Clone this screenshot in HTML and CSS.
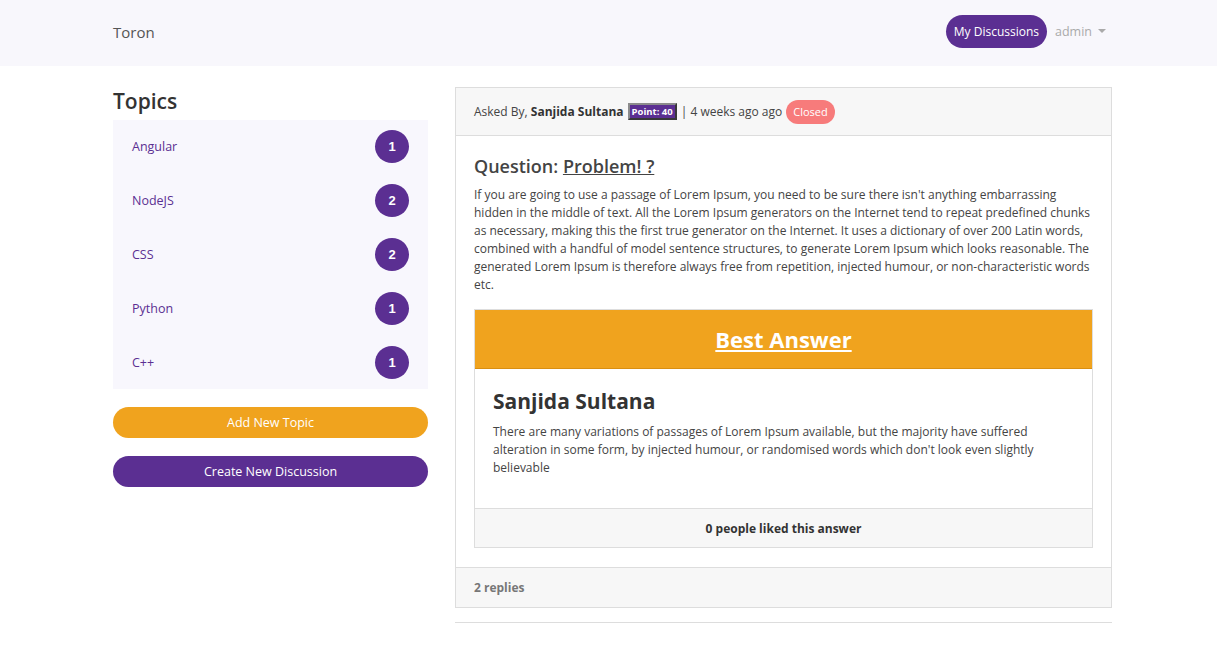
FILE: index.html
```html
<!DOCTYPE html>
<html>
<head>
<meta charset="utf-8">
<link rel="stylesheet" href="styles.css">
</head>
<body>
<header class="topbar">
  <div class="wrap topbar-inner">
    <a class="brand">Toron</a>
    <div class="nav-right">
      <a class="btn-pill">My Discussions</a>
      <span class="user">admin <span class="caret"></span></span>
    </div>
  </div>
</header>
<main class="wrap layout">
  <aside class="sidebar">
    <h2 class="side-title">Topics</h2>
    <ul class="topics">
      <li><span>Angular</span><span class="count">1</span></li>
      <li><span>NodeJS</span><span class="count">2</span></li>
      <li><span>CSS</span><span class="count">2</span></li>
      <li><span>Python</span><span class="count">1</span></li>
      <li><span>C++</span><span class="count">1</span></li>
    </ul>
    <button class="wide-btn orange">Add New Topic</button>
    <button class="wide-btn purple">Create New Discussion</button>
  </aside>
  <section class="content">
    <div class="card">
      <div class="card-head">
        <span>Asked By, <b>Sanjida Sultana</b></span>
        <span class="point">Point: 40</span>
        <span>| 4 weeks ago ago</span>
        <span class="closed">Closed</span>
      </div>
      <div class="card-body">
        <h3 class="q-title">Question: <u>Problem! ?</u></h3>
        <p class="q-text">If you are going to use a passage of Lorem Ipsum, you need to be sure there isn't anything embarrassing hidden in the middle of text. All the Lorem Ipsum generators on the Internet tend to repeat predefined chunks as necessary, making this the first true generator on the Internet. It uses a dictionary of over 200 Latin words, combined with a handful of model sentence structures, to generate Lorem Ipsum which looks reasonable. The generated Lorem Ipsum is therefore always free from repetition, injected humour, or non-characteristic words etc.</p>
        <div class="answer">
          <div class="answer-head"><u>Best Answer</u></div>
          <div class="answer-body">
            <h4 class="a-name">Sanjida Sultana</h4>
            <p class="a-text">There are many variations of passages of Lorem Ipsum available, but the majority have suffered alteration in some form, by injected humour, or randomised words which don't look even slightly believable</p>
          </div>
          <div class="answer-foot">0 people liked this answer</div>
        </div>
      </div>
      <div class="card-foot">2 replies</div>
    </div>
    <hr class="rule">
  </section>
</main>
</body>
</html>
```
FILE: styles.css
```css
* { box-sizing: border-box; }
body {
  margin: 0;
  font-family: "Open Sans", "Noto Sans", sans-serif;
  color: #444;
  background: #fff;
  font-size: 12px;
}
.wrap {
  width: 999px;
  margin: 0 0 0 113px;
}
.topbar {
  background: #f8f7fc;
  height: 66px;
}
.topbar-inner {
  height: 66px;
  display: flex;
  align-items: center;
  justify-content: space-between;
}
.brand {
  font-size: 15px;
  color: #555;
  margin-top: -2px;
}
.nav-right {
  display: flex;
  align-items: center;
  gap: 8px;
  margin-top: -4px;
  margin-right: 6px;
}
.btn-pill {
  background: #5b2f92;
  color: #fff;
  height: 33px;
  border-radius: 17px;
  padding: 0 8px;
  display: flex;
  align-items: center;
  font-size: 12px;
}
.user {
  color: #aaa;
  font-size: 12.5px;
  display: flex;
  align-items: center;
  gap: 6px;
}
.caret {
  width: 0; height: 0;
  border-left: 4px solid transparent;
  border-right: 4px solid transparent;
  border-top: 4px solid #aaa;
}
.layout {
  display: flex;
  gap: 27px;
  align-items: flex-start;
  padding-top: 21px;
}
.sidebar { width: 315px; flex: none; }
.side-title {
  margin: 1px 0 6px;
  font-size: 21px;
  font-weight: 600;
  color: #333;
  line-height: 26px;
}
.topics {
  list-style: none;
  margin: 0;
  padding: 0 19px;
  background: #f8f7fd;
}
.topics li {
  height: 53.8px;
  display: flex;
  align-items: center;
  justify-content: space-between;
  color: #5b2f92;
  font-size: 12.5px;
}
.count {
  width: 34px; height: 33px;
  border-radius: 50%;
  background: #5b2f92;
  color: #fff;
  font-weight: 700;
  font-family: "Liberation Sans", Arial, sans-serif;
  font-size: 13px;
  display: flex;
  align-items: center;
  justify-content: center;
}
.wide-btn {
  display: block;
  width: 100%;
  height: 31px;
  border: 0;
  border-radius: 16px;
  color: #fff;
  font-family: inherit;
  font-size: 12.5px;
  margin-top: 18px;
}
.orange { background: #f0a31e; }
.purple { background: #5b2f92; }
.content { width: 657px; flex: none; padding-top: 0; }
.card { border: 1px solid #ddd; }
.card-head {
  background: #f7f7f7;
  border-bottom: 1px solid #ddd;
  height: 48px;
  padding: 0 18px;
  display: flex;
  align-items: center;
  gap: 4px;
  color: #444;
}
.card-head b { color: #333; }
.point {
  background: #5b2f92;
  color: #fff;
  font-weight: 700;
  font-size: 9.5px;
  border: 2px solid #8c8c8c;
  border-style: outset;
  padding: 0 2px;
  height: 17px;
  line-height: 13px;
}
.closed {
  background: #f77b7b;
  color: #fff;
  height: 24px;
  border-radius: 12px;
  padding: 0 7px;
  display: flex;
  align-items: center;
  font-size: 11px;
}
.card-body { padding: 18px 18px 19px; }
.q-title {
  margin: 0 0 8px;
  font-size: 18px;
  font-weight: 600;
  color: #444;
  line-height: 24px;
}
.q-text {
  margin: 0 0 15px;
  line-height: 18px;
  color: #444;
  font-size: 12px;
}
.answer { border: 1px solid #ddd; }
.answer-head {
  background: #f0a31e;
  height: 59px;
  border-bottom: 1px solid #d98f12;
  color: #fff;
  font-size: 22px;
  font-weight: 700;
  display: flex;
  align-items: center;
  justify-content: center;
}
.answer-body { padding: 18px 18px 31px; }
.a-name {
  margin: 0 0 8px;
  font-size: 21px;
  font-weight: 700;
  color: #333;
  line-height: 28px;
}
.a-text { margin: 0; line-height: 18px; color: #444; }
.answer-foot {
  background: #f7f7f7;
  border-top: 1px solid #ddd;
  height: 39px;
  display: flex;
  align-items: center;
  justify-content: center;
  font-weight: 700;
  color: #333;
}
.card-foot {
  background: #f7f7f7;
  border-top: 1px solid #ddd;
  height: 40px;
  padding: 0 18px;
  display: flex;
  align-items: center;
  font-weight: 700;
  color: #777;
}
.rule {
  border: 0;
  border-top: 1px solid #ddd;
  margin: 14px 0 0;
}
```
